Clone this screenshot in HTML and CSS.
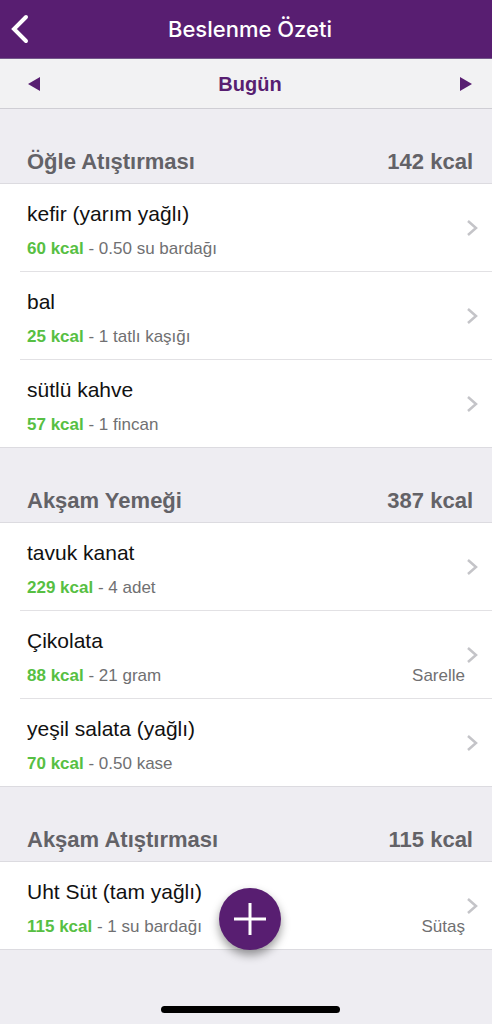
FILE: index.html
```html
<!DOCTYPE html>
<html lang="tr">
<head>
<meta charset="utf-8">
<meta name="viewport" content="width=device-width, initial-scale=1">
<title>Beslenme Özeti</title>
<link rel="stylesheet" href="styles.css">
</head>
<body>
<svg class="defs" aria-hidden="true">
  <symbol id="chevron" viewBox="0 0 12 18"><path d="M2 2l8 7-8 7" fill="none" stroke="currentColor" stroke-width="2.500"/></symbol>
</svg>
<div class="app">
  <header class="navbar">
    <button class="back" type="button" aria-label="Geri"><svg viewBox="0 0 20 30" width="20" height="30"><path d="M16 3L4 15l12 12" fill="none" stroke="currentColor" stroke-width="4" stroke-linecap="round"/></svg></button>
    <h1 class="title">Beslenme Özeti</h1>
  </header>
  <nav class="daybar">
    <button class="day-step" type="button" aria-label="Önceki gün"><svg viewBox="0 0 12 14" width="12" height="14"><path d="M12 0v14L0 7z" fill="currentColor"/></svg></button>
    <span class="day">Bugün</span>
    <button class="day-step" type="button" aria-label="Sonraki gün"><svg viewBox="0 0 12 14" width="12" height="14"><path d="M0 0v14l12-7z" fill="currentColor"/></svg></button>
  </nav>
  <main>
    <section>
      <div class="meal"><h2>Öğle Atıştırması</h2><span>142 kcal</span></div>
      <ul class="foods">
        <li><a class="food" href="#"><span class="name">kefir (yarım yağlı)</span><span class="info"><span><b>60 kcal</b> - 0.50 su bardağı</span></span><svg class="chevron"><use href="#chevron"/></svg></a></li>
        <li><a class="food" href="#"><span class="name">bal</span><span class="info"><span><b>25 kcal</b> - 1 tatlı kaşığı</span></span><svg class="chevron"><use href="#chevron"/></svg></a></li>
        <li><a class="food" href="#"><span class="name">sütlü kahve</span><span class="info"><span><b>57 kcal</b> - 1 fincan</span></span><svg class="chevron"><use href="#chevron"/></svg></a></li>
      </ul>
    </section>
    <section>
      <div class="meal"><h2>Akşam Yemeği</h2><span>387 kcal</span></div>
      <ul class="foods">
        <li><a class="food" href="#"><span class="name">tavuk kanat</span><span class="info"><span><b>229 kcal</b> - 4 adet</span></span><svg class="chevron"><use href="#chevron"/></svg></a></li>
        <li><a class="food" href="#"><span class="name">Çikolata</span><span class="info"><span><b>88 kcal</b> - 21 gram</span><span>Sarelle</span></span><svg class="chevron"><use href="#chevron"/></svg></a></li>
        <li><a class="food" href="#"><span class="name">yeşil salata (yağlı)</span><span class="info"><span><b>70 kcal</b> - 0.50 kase</span></span><svg class="chevron"><use href="#chevron"/></svg></a></li>
      </ul>
    </section>
    <section>
      <div class="meal"><h2>Akşam Atıştırması</h2><span>115 kcal</span></div>
      <ul class="foods">
        <li><a class="food" href="#"><span class="name">Uht Süt (tam yağlı)</span><span class="info"><span><b>115 kcal</b> - 1 su bardağı</span><span>Sütaş</span></span><svg class="chevron"><use href="#chevron"/></svg></a></li>
      </ul>
    </section>
  </main>
  <button class="add" type="button" aria-label="Ekle"><svg viewBox="0 0 34 34" width="34" height="34"><path d="M17 1v32M1 17h32" fill="none" stroke="currentColor" stroke-width="3"/></svg></button>
  <div class="home-indicator"></div>
</div>
</body>
</html>
```

FILE: styles.css
```css
* { box-sizing: border-box; }
body {
  margin: 0;
  background: #eeedf2;
  color: #111;
  font-family: "Helvetica Neue", "Liberation Sans", Arial, sans-serif;
}
button {
  padding: 0;
  border: 0;
  background: none;
  cursor: pointer;
}
svg { display: block; }
h1, h2 { margin: 0; font: inherit; }
.defs { position: absolute; width: 0; height: 0; }
.app { position: relative; min-height: 100vh; }

.navbar {
  display: grid;
  grid-template-columns: 40px 1fr 40px;
  align-items: center;
  height: 59px;
  padding: 0 2px 0 10px;
  border-bottom: 1px solid #73578a;
  background: #581e71;
  color: #fff;
}
.back { color: inherit; }
.title {
  font: 500 22px/28px Inter, sans-serif;
  text-align: center;
}

.daybar {
  display: flex;
  align-items: center;
  justify-content: space-between;
  height: 50px;
  padding: 0 20px 0 28px;
  border-bottom: 1px solid #cfced4;
  background: #f2f2f3;
  color: #581e71;
}
.day-step { color: inherit; }
.day {
  font-size: 20px;
  font-weight: 700;
  line-height: 24px;
}

.meal {
  display: flex;
  align-items: flex-end;
  justify-content: space-between;
  height: 75px;
  padding: 0 19px 7px 27px;
  border-bottom: 1px solid #dcdbe0;
  color: #636267;
  font-size: 22px;
  font-weight: 700;
  line-height: 28px;
}

.foods {
  margin: 0;
  padding: 0 0 0 20px;
  border-bottom: 1px solid #dcdbe0;
  background: #fff;
  list-style: none;
}
.foods li + li { border-top: 1px solid #e2e1e4; }
.food {
  display: grid;
  grid-template-columns: 1fr 12px;
  column-gap: 1px;
  row-gap: 3px;
  align-items: center;
  padding: 10px 14px 10px 7px;
  color: inherit;
  text-decoration: none;
}
.name { grid-column: 1; font-size: 21px; line-height: 40px; }
.info {
  grid-column: 1;
  display: flex;
  justify-content: space-between;
  color: #707072;
  font-size: 17px;
  line-height: 24px;
}
.info b { color: #57bf43; font-weight: 700; }
.chevron {
  grid-column: 2;
  grid-row: 1 / 3;
  width: 12px;
  height: 18px;
  color: #c4c4c8;
}

.add {
  position: fixed;
  bottom: 74px;
  left: calc(50% + 4px);
  display: grid;
  place-items: center;
  width: 62px;
  height: 62px;
  margin-left: -31px;
  border-radius: 50%;
  background: #581e71;
  color: #fff;
  box-shadow: 0 5px 10px rgba(0, 0, 0, .4);
}
.home-indicator {
  position: fixed;
  bottom: 11px;
  left: 50%;
  width: 179px;
  height: 7px;
  margin-left: -85px;
  border-radius: 4px;
  background: #000;
}
```
